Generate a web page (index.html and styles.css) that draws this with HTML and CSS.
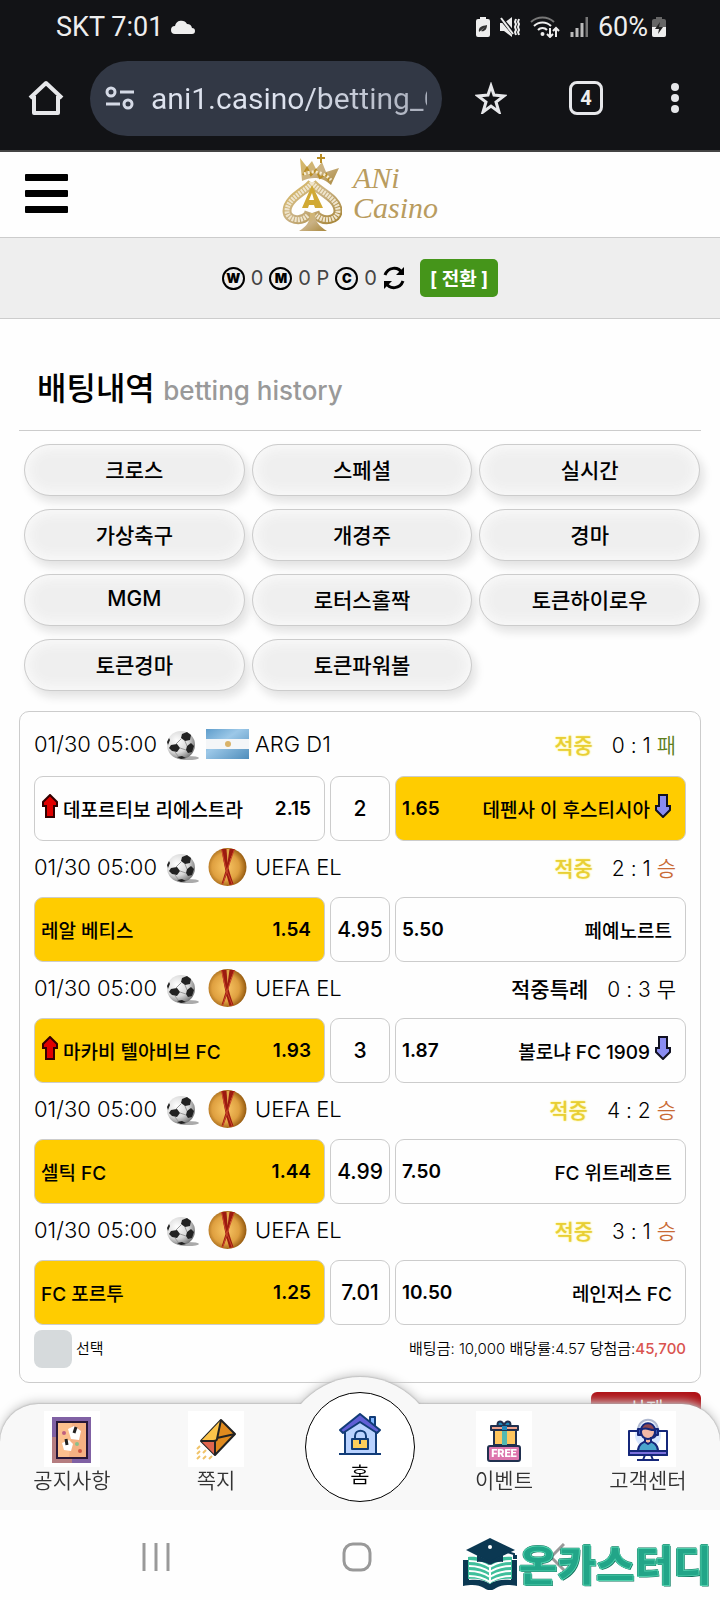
FILE: index.html
```html
<!DOCTYPE html>
<html lang="ko">
<head>
    <meta charset="UTF-8">
    <meta name="viewport" content="width=device-width, initial-scale=1.0">
    <title>배팅내역 - ANi Casino</title>
    <link rel="stylesheet" href="styles.css">
</head>
<body>
    <!-- Shared icons -->
    <svg class="defs" width="0" height="0" aria-hidden="true">
        <defs>
            <radialGradient id="ballShade" cx="35%" cy="35%" r="70%">
                <stop offset="0" stop-color="#ffffff"/>
                <stop offset="0.6" stop-color="#d8d8d8"/>
                <stop offset="1" stop-color="#777777"/>
            </radialGradient>
            <radialGradient id="uefaShade" cx="45%" cy="50%" r="55%">
                <stop offset="0" stop-color="#f9c766"/>
                <stop offset="0.65" stop-color="#dfa040"/>
                <stop offset="1" stop-color="#94590f"/>
            </radialGradient>
            <linearGradient id="gold" x1="0" y1="0" x2="1" y2="1">
                <stop offset="0" stop-color="#d9b95f"/>
                <stop offset="0.5" stop-color="#c9b184"/>
                <stop offset="1" stop-color="#a9883c"/>
            </linearGradient>
            <linearGradient id="sky" x1="0" y1="0" x2="1" y2="1">
                <stop offset="0" stop-color="#5f9dcb"/>
                <stop offset="0.4" stop-color="#9cc8e8"/>
                <stop offset="1" stop-color="#4f8dbb"/>
            </linearGradient>
        </defs>
        <symbol id="ball" viewBox="0 0 34 30">
            <ellipse cx="22" cy="27" rx="11" ry="2" fill="#aaa"/>
            <circle cx="15" cy="14" r="14" fill="url(#ballShade)"/>
            <g fill="#222">
                <path d="M16 3l5-2 4 3-1 5-5 1-4-3z"/>
                <path d="M5 14l6-1 3 4-3 4-5-1-3-3z"/>
                <path d="M21 15l4-3 3 3-2 6-4 1-2-3z"/>
                <path d="M1 11l2-4 1 2-2 5z"/>
                <path d="M11 26l5-1 4 2-5 1z"/>
            </g>
            <path d="M15 8l-5 5M19 10l2 5M14 17l6 2M9 21l3 4" stroke="#999" fill="none"/>
        </symbol>
        <symbol id="uefa" viewBox="0 0 38 38">
            <circle cx="19" cy="19" r="19" fill="url(#uefaShade)"/>
            <path d="M13 1l13 0-4 10-2 9 2 7 3 9-4 1-3-10-3 8-2 1 4-13-2-10z" fill="#9c1b10"/>
            <path d="M18 1l3 0-2 14z" fill="#e2a548"/>
            <path d="M13 1l4 18 7 18M26 1l-7 20-5 16" stroke="#c9462a" fill="none"/>
        </symbol>
        <symbol id="up" viewBox="0 0 18 24">
            <path d="M9 1l7 7v4h-3v11H5V12H2V8z" fill="#e00000" stroke="#300" stroke-width="2"/>
        </symbol>
        <symbol id="down" viewBox="0 0 18 24">
            <path d="M9 23l7-7v-4h-3V1H5v11H2v4z" fill="#8a8cf0" stroke="#112" stroke-width="2"/>
        </symbol>
    </svg>

    <!-- Phone status bar and browser toolbar -->
    <div class="browser">
        <div class="status">
            <span>SKT 7:01</span>
            <svg width="24" height="14" viewBox="0 0 24 14"><path d="M4 14a4 4 0 0 1 0-8A6.500 6.500 0 0 1 16 4a5 5 0 0 1 5 4 3 3 0 0 1 0 6z" fill="#eee"/></svg>
            <div class="status-right">
                <svg width="14" height="20" viewBox="0 0 14 20"><path d="M4 0h6v2h2a2 2 0 0 1 2 2v14a2 2 0 0 1-2 2H2a2 2 0 0 1-2-2V4a2 2 0 0 1 2-2h2z" fill="#eee"/><path d="M3 15c-1-5 3-6 8-7 0 5-3 7-6 6l4-4" fill="#333"/></svg>
                <svg width="20" height="20" viewBox="0 0 20 20"><path d="M0 6h4l8-6v20l-8-6H0z" fill="#eee"/><path d="M0 0l14 17" stroke="#121316" stroke-width="4"/><path d="M1 1l12 16" stroke="#eee" stroke-width="2"/><path d="M16 2l-1 3 1 2-1 3 1 3-1 2 1 3M19 2l-1 3 1 2-1 3 1 3-1 2 1 3" stroke="#eee" stroke-width="2" fill="none"/></svg>
                <svg width="30" height="22" viewBox="0 0 30 22" fill="none" stroke="#eee" stroke-width="2"><path d="M1 6a17 17 0 0 1 23 0" stroke="#777"/><path d="M4 10a12 12 0 0 1 17 0M8 14a6 6 0 0 1 9 0"/><circle cx="12.500" cy="18" r="1" fill="#eee"/><path d="M20 12v9M17 18l3 3 3-3M26 21v-9M23 15l3-3 3 3"/></svg>
                <svg width="18" height="20" viewBox="0 0 18 20" stroke-width="3" stroke="#bbb"><path d="M2 15v5M7 11v9M12 6v14"/><path d="M17 0v20" stroke="#777"/></svg>
                <span>60%</span>
                <svg width="14" height="20" viewBox="0 0 14 20"><path d="M4 0h6v2h2a2 2 0 0 1 2 2v14a2 2 0 0 1-2 2H2a2 2 0 0 1-2-2V4a2 2 0 0 1 2-2h2z" fill="#666"/><path d="M0 10h14v8a2 2 0 0 1-2 2H2a2 2 0 0 1-2-2z" fill="#eee"/><path d="M8 5l-5 7h4l-1 5 5-7H7z" fill="#222"/></svg>
            </div>
        </div>
        <div class="toolbar">
            <button class="tool" aria-label="Home">
                <svg width="36" height="36" viewBox="0 0 36 36" fill="none" stroke="#e6e7ea" stroke-width="4" stroke-linejoin="round"><path d="M2 18L18 3l16 15M6 16v17h24V16"/></svg>
            </button>
            <label class="address">
                <svg width="30" height="26" viewBox="0 0 30 26" fill="none" stroke="#d5dae6" stroke-width="3"><circle cx="6" cy="7" r="4"/><path d="M15 7h14M1 19h14"/><circle cx="23" cy="19" r="4"/></svg>
                <input type="text" value="ani1.casino/betting_C" aria-label="Address">
            </label>
            <button class="tool" aria-label="Bookmark">
                <svg width="32" height="32" viewBox="0 0 32 32" fill="none" stroke="#e6e7ea" stroke-width="3"><path d="M16 4l3 9 10 1-8 6 3 10-8-6-8 6 3-10-8-6 10-1z"/></svg>
            </button>
            <button class="tool tabs" aria-label="Tabs">4</button>
            <button class="tool" aria-label="More">
                <svg width="10" height="32" viewBox="0 0 10 32" fill="#e6e7ea"><circle cx="5" cy="5" r="4"/><circle cx="5" cy="16" r="4"/><circle cx="5" cy="27" r="4"/></svg>
            </button>
        </div>
    </div>

    <header class="header">
        <button class="menu" aria-label="Menu"><i></i><i></i><i></i></button>
        <a class="logo" href="#">
            <svg width="60" height="78" viewBox="0 0 60 78">
                <path d="M30 29C24 37 5 44 5 57c0 9 14 12 21 4l1-3M30 29c6 8 26 15 26 28 0 9-14 12-22 4l-1-3" fill="none" stroke="url(#gold)" stroke-width="9"/>
                <path d="M30 29C24 37 5 44 5 57c0 9 14 12 21 4M30 29c6 8 26 15 26 28 0 9-14 12-22 4" fill="none" stroke="#efe5cd" stroke-width="5" stroke-dasharray="2 1"/>
                <path d="M28 59h5c0 9 4 13 12 18H17c8-5 11-9 11-18z" fill="url(#gold)"/>
                <path d="M20 27L18 4l7 9 5-6 4 8 6-7 4 10 13-4-8 17c-8-8-19-9-29-4z" fill="url(#gold)"/>
                <path d="M21 21l4-7 4 7 5-5 4 8 6-4 3 7M39 0v9M35 4h8" fill="none" stroke="#b98d25" stroke-width="2"/>
                <path d="M22 20c9-4 20-2 27 6" fill="none" stroke="#f5ecd3" stroke-width="3" stroke-dasharray="2 2"/>
                <path d="M30 31l11 23h-8l-1-3h-5l-1 3h-6z" fill="#d1a934"/>
                <path d="M30 39l2 7h-5z" fill="#fff"/>
            </svg>
            <span class="logo-text"><span>ANi</span><span>Casino</span></span>
        </a>
    </header>

    <div class="wallet">
        <b class="coin">W</b>
        <span>0</span>
        <b class="coin">M</b>
        <span>0 P</span>
        <b class="coin">C</b>
        <span>0</span>
        <button class="refresh" aria-label="새로고침">
            <svg width="22" height="24" viewBox="0 0 22 24" fill="none" stroke="#000" stroke-width="3"><path d="M2 9C5 1 15 0 19 7M20 15C17 23 7 24 3 17"/><path d="M21 1v8h-8zM1 23v-8h8z" fill="#000" stroke="none"/></svg>
        </button>
        <button class="convert">[ 전환 ]</button>
    </div>

    <main>
        <h1>배팅내역 <small>betting history</small></h1>

        <div class="games">
            <button>크로스</button>
            <button>스페셜</button>
            <button>실시간</button>
            <button>가상축구</button>
            <button>개경주</button>
            <button>경마</button>
            <button>MGM</button>
            <button>로터스홀짝</button>
            <button>토큰하이로우</button>
            <button>토큰경마</button>
            <button>토큰파워볼</button>
        </div>

        <section class="slip">
            <div class="match first">
                <span>01/30 05:00</span>
                <svg class="ball"><use href="#ball"/></svg>
                <svg class="league" viewBox="0 0 43 30"><rect width="43" height="30" fill="url(#sky)"/><path d="M0 10h43v10H0z" fill="#f4f6f8"/><circle cx="22" cy="15" r="3" fill="#d9b36a"/></svg>
                <span>ARG D1</span>
                <div class="result"><b class="hit">적중</b><span>0 : 1 <em class="lose">패</em></span></div>
            </div>
            <div class="odds">
                <div class="team"><svg class="arrow"><use href="#up"/></svg><span>데포르티보 리에스트라</span><b>2.15</b></div>
                <div class="draw">2</div>
                <div class="team away picked"><b>1.65</b><span>데펜사 이 후스티시아</span><svg class="arrow"><use href="#down"/></svg></div>
            </div>

            <div class="match">
                <span>01/30 05:00</span>
                <svg class="ball"><use href="#ball"/></svg>
                <svg class="league"><use href="#uefa"/></svg>
                <span>UEFA EL</span>
                <div class="result"><b class="hit">적중</b><span>2 : 1 <em class="win">승</em></span></div>
            </div>
            <div class="odds">
                <div class="team picked"><span>레알 베티스</span><b>1.54</b></div>
                <div class="draw">4.95</div>
                <div class="team away"><b>5.50</b><span>페예노르트</span></div>
            </div>

            <div class="match">
                <span>01/30 05:00</span>
                <svg class="ball"><use href="#ball"/></svg>
                <svg class="league"><use href="#uefa"/></svg>
                <span>UEFA EL</span>
                <div class="result"><b>적중특례</b><span>0 : 3 <em>무</em></span></div>
            </div>
            <div class="odds">
                <div class="team picked"><svg class="arrow"><use href="#up"/></svg><span>마카비 텔아비브 FC</span><b>1.93</b></div>
                <div class="draw">3</div>
                <div class="team away"><b>1.87</b><span>볼로냐 FC 1909</span><svg class="arrow"><use href="#down"/></svg></div>
            </div>

            <div class="match">
                <span>01/30 05:00</span>
                <svg class="ball"><use href="#ball"/></svg>
                <svg class="league"><use href="#uefa"/></svg>
                <span>UEFA EL</span>
                <div class="result"><b class="hit">적중</b><span>4 : 2 <em class="win">승</em></span></div>
            </div>
            <div class="odds">
                <div class="team picked"><span>셀틱 FC</span><b>1.44</b></div>
                <div class="draw">4.99</div>
                <div class="team away"><b>7.50</b><span>FC 위트레흐트</span></div>
            </div>

            <div class="match">
                <span>01/30 05:00</span>
                <svg class="ball"><use href="#ball"/></svg>
                <svg class="league"><use href="#uefa"/></svg>
                <span>UEFA EL</span>
                <div class="result"><b class="hit">적중</b><span>3 : 1 <em class="win">승</em></span></div>
            </div>
            <div class="odds">
                <div class="team picked"><span>FC 포르투</span><b>1.25</b></div>
                <div class="draw">7.01</div>
                <div class="team away"><b>10.50</b><span>레인저스 FC</span></div>
            </div>

            <div class="summary">
                <input type="checkbox" id="pick">
                <label for="pick">선택</label>
                <p>배팅금: 10,000 배당률:4.57 당첨금:<b>45,700</b></p>
            </div>
        </section>

        <button class="delete">삭제</button>
    </main>

    <!-- Fixed bottom menu -->
    <div class="bottom">
        <nav class="menu-bar">
            <a href="#">
                <span class="icon">
                    <svg width="56" height="56" viewBox="0 0 56 56">
                        <path d="M8 6h39v46H8z" fill="#8061a4"/><path d="M8 26h8v26H8z" fill="#3b2450"/><path d="M8 52V26h4v21h16v5z" fill="#b57d80"/>
                        <path d="M13 11h30v36H13z" fill="#fcc08e" stroke="#281838" stroke-width="2"/><path d="M28 12h14v34H25z" fill="#f4b183"/>
                        <path d="M24 18l6-3 7 5-2 9-8-1z" fill="#fff"/><path d="M18 32l7-3 4 4-2 7-7-1z" fill="#fff"/>
                        <path d="M32 16l-2 6M22 28l1 6" stroke="#222" stroke-width="3"/><circle cx="20" cy="22" r="2" fill="#c0607f"/><circle cx="33" cy="33" r="2" fill="#8bbf8a"/><circle cx="36" cy="40" r="2" fill="#d05a43"/>
                    </svg>
                </span>
                공지사항
            </a>
            <a href="#">
                <span class="icon">
                    <svg width="56" height="56" viewBox="0 0 56 56" stroke-linejoin="round">
                        <path d="M33 9l14 14-20 21-14-14z" fill="#e08a1e" stroke="#222" stroke-width="2"/>
                        <path d="M13 30l20-21-4 20z" fill="#fbc34a"/><path d="M13 30l14 14 0-14z" fill="#e0654e"/>
                        <path d="M33 9l-4 19c0 2-2 2-4 2l-12 0M29 27l18-4M27 30v14" fill="none" stroke="#222" stroke-width="2"/>
                        <path d="M9 38l3-3M9 43l3-3M9 48l3-3M15 42l3-3M15 48l3-3M21 48l3-3" stroke="#f0c46a" stroke-width="2"/>
                    </svg>
                </span>
                쪽지
            </a>
            <a class="active" href="#">
                <svg width="42" height="42" viewBox="0 0 42 42" stroke="#123c78" stroke-width="2" stroke-linejoin="round">
                    <path d="M31 4h5v12l-5-5z" fill="#7fb5ff"/><path d="M6 17L21 5l16 12v24H6z" fill="#b9d2ff"/>
                    <path d="M21 1L1 17l3 3 17-11 17 11 3-3z" fill="#615fd6"/>
                    <path d="M16 26v-3c0-7 11-7 11 0v3" fill="none"/><path d="M13 26h16v10H13z" fill="#ffcf5b"/><path d="M21 26v5M0 41h42"/>
                </svg>
                홈
            </a>
            <a href="#">
                <span class="icon">
                    <svg width="56" height="56" viewBox="0 0 56 56" stroke="#20304f" stroke-width="2" stroke-linejoin="round">
                        <path d="M28 14c-3-6-8-3-6 1M28 14c3-6 8-3 6 1" fill="#1e86b8"/><path d="M18 19h22v15H18z" fill="#ffc65e"/><path d="M26 19h5v15h-5z" fill="#53b9b2" stroke="none"/><path d="M15 15h27v4H15z" fill="#f0a58f"/><path d="M26 15h5v4h-5z" fill="#1e86b8" stroke="none"/>
                        <rect x="12" y="35" width="32" height="15" rx="2" fill="#dd75ad"/>
                        <text x="28" y="46" class="free">FREE</text>
                    </svg>
                </span>
                이벤트
            </a>
            <a href="#">
                <span class="icon">
                    <svg width="56" height="56" viewBox="0 0 56 56" stroke="#15277a" stroke-width="2" stroke-linejoin="round">
                        <circle cx="28" cy="24" r="13" fill="#d8e7ff" stroke="none"/><path d="M20 20H9v24h38V20H36" fill="none"/><path d="M9 40h38v4H9z" fill="#7b70dc"/>
                        <path d="M18 40c0-13 20-13 20 0z" fill="#4aa6cc"/><path d="M25 26h6v5l-3 2-3-2z" fill="#f3b9a6"/><circle cx="28" cy="21" r="7" fill="#f3b9a6"/><path d="M21 19c1-9 13-9 14 0-5 1-9-4-14 0z" fill="#8f4850"/>
                        <path d="M18 20c0-15 20-15 20 0" fill="none" stroke="#b0b9d0"/><path d="M18 18h3v6h-3zM35 18h3v6h-3z" fill="#3757b8"/><path d="M36 24c-1 3-3 3-6 3M25 44l-2 5h10l-2-5M17 49h22" fill="none"/>
                    </svg>
                </span>
                고객센터
            </a>
        </nav>
        <div class="system">
            <button aria-label="Recent"><svg width="28" height="28" viewBox="0 0 28 28" stroke="#999" stroke-width="3"><path d="M2 0v28M14 0v28M26 0v28"/></svg></button>
            <button aria-label="Home"><svg width="30" height="30" viewBox="0 0 30 30"><rect x="2" y="2" width="26" height="26" rx="9" fill="none" stroke="#999" stroke-width="3"/></svg></button>
            <button aria-label="Back"><svg width="16" height="28" viewBox="0 0 16 28" fill="none" stroke="#999" stroke-width="3"><path d="M15 1L2 14l13 13"/></svg></button>
        </div>
        <div class="watermark">
            <svg width="54" height="52" viewBox="0 0 54 52">
                <path d="M0 22l6 0v20c9-1 16 0 21 4 5-4 12-5 21-4V22h6v26c-10-2-16-1-21 2-4 3-8 3-12 0-5-3-11-4-21-2z" fill="#0b3852"/>
                <path d="M5 19c9-1 17 2 22 6 5-4 13-7 22-6v22c-9-1-17 1-22 5-5-4-13-6-22-5z" fill="#3fbf9b"/>
                <path d="M6 23c9 0 15 2 21 6 6-4 12-6 21-6M6 28c9 0 15 2 21 6 6-4 12-6 21-6M6 33c9 0 15 2 21 6 6-4 12-6 21-6M6 38c9 0 15 2 21 6 6-4 12-6 21-6M27 25v20" fill="none" stroke="#fff" stroke-width="2"/>
                <path d="M27 0l25 12-25 12L3 12z" fill="#0b3852"/><path d="M14 17v7c5-1 10 1 13 3 3-2 8-4 13-3v-7l-13 6z" fill="#0b3852"/><circle cx="27" cy="9" r="2" fill="#fff"/><path d="M41 13l10 3v5M50 20l3 0 0-3" fill="none" stroke="#0b3852" stroke-width="2"/>
            </svg>
            <span>온카스터디</span>
        </div>
    </div>
</body>
</html>
```
FILE: styles.css
```css
* {
    box-sizing: border-box;
}

body {
    margin: 0;
    background-color: #fefefe;
    color: #000;
    font-family: Inter, "Noto Sans CJK KR", sans-serif;
    font-size: 21px;
}

button {
    padding: 0;
    border: none;
    background: none;
    color: inherit;
    font-family: inherit;
    cursor: pointer;
}

a {
    color: inherit;
    text-decoration: none;
}

svg {
    display: block;
    flex: none;
}

.defs {
    position: absolute;
}

/* Status bar + browser toolbar */
.browser {
    height: 152px;
    background-color: #121316;
    border-bottom: 2px solid #444;
    color: #eee;
    font-family: Roboto, sans-serif;
}

.status {
    display: flex;
    align-items: center;
    gap: 8px;
    height: 54px;
    padding: 0 54px 0 56px;
    font-size: 27px;
}

.status-right {
    display: flex;
    align-items: center;
    gap: 10px;
    margin-left: auto;
}

.status-right span {
    margin-right: -6px;
}

.toolbar {
    display: flex;
    align-items: center;
    height: 88px;
    padding: 0 40px 0 28px;
}

.tool {
    flex: none;
}

.address {
    display: flex;
    flex: 1;
    align-items: center;
    gap: 16px;
    min-width: 0;
    height: 75px;
    margin: 0 33px 0 26px;
    padding: 0 15px;
    border-radius: 38px;
    background-color: #323845;
}

.address input {
    flex: 1;
    min-width: 0;
    padding: 0;
    border: none;
    outline: none;
    background: linear-gradient(90deg, #dde2ee 50%, #a9aebb);
    background-clip: text;
    -webkit-background-clip: text;
    color: transparent;
    font-family: Roboto, sans-serif;
    font-size: 30px;
}

.tabs {
    width: 34px;
    height: 34px;
    margin: 0 67px 0 62px;
    border: 3px solid #e6e7ea;
    border-radius: 8px;
    font-size: 20px;
    font-weight: bold;
}

/* Site header */
.header {
    display: flex;
    align-items: center;
    justify-content: center;
    position: relative;
    height: 86px;
    padding-bottom: 3px;
    border-bottom: 1px solid #ccc;
}

.menu {
    display: flex;
    flex-direction: column;
    gap: 9px;
    position: absolute;
    left: 25px;
}

.menu i {
    width: 43px;
    height: 7px;
    border-radius: 1px;
    background-color: #000;
}

.logo {
    display: flex;
    align-items: center;
    gap: 11px;
    color: #b99c5f;
    font: italic 30px/30px "Liberation Serif", serif;
}

.logo-text {
    display: flex;
    flex-direction: column;
}

.wallet {
    display: flex;
    align-items: center;
    justify-content: center;
    gap: 6px;
    height: 81px;
    border-bottom: 1px solid #ccc;
    background-color: #eee;
    color: #444;
    font-size: 20px;
}

.coin {
    width: 23px;
    height: 23px;
    border: 2px solid #000;
    border-radius: 50%;
    color: #000;
    font-size: 13px;
    font-weight: 900;
    line-height: 19px;
    text-align: center;
}

.convert {
    height: 38px;
    margin-left: 9px;
    padding: 0 10px 2px;
    border-radius: 5px;
    background-color: #45951a;
    color: #fff;
    font-size: 19px;
    font-weight: bold;
}

/* Betting history */
main {
    padding: 46px 19px 200px;
}

h1 {
    margin: 0 0 13px;
    padding: 0 18px 15px;
    border-bottom: 1px solid #ccc;
    font-size: 32px;
    font-weight: 500;
    line-height: 48px;
}

h1 small {
    color: #999;
    font-size: 26px;
    font-weight: 500;
}

.games {
    display: grid;
    grid-template-columns: repeat(3, 1fr);
    gap: 13px 7px;
    padding: 0 1px 0 5px;
}

.games button {
    height: 52px;
    padding-bottom: 3px;
    border: 1px solid #ccc;
    border-radius: 26px;
    background-color: #efefef;
    box-shadow: 4px 6px 10px #e2e2e2, inset 0 0 12px 4px #f9f9f9;
    font-size: 21px;
    font-weight: 500;
}

.slip {
    margin-top: 20px;
    padding: 0 14px 14px;
    border: 1px solid #ccc;
    border-radius: 10px;
}

.match {
    display: flex;
    align-items: center;
    height: 56px;
    padding: 0 10px 5px 0;
    font-size: 22px;
    font-weight: 300;
}

.first {
    height: 64px;
    padding-bottom: 0;
}

.ball {
    width: 34px;
    height: 30px;
    margin: 4px 6px 0 9px;
}

.league {
    width: 43px;
    height: 38px;
    margin-right: 6px;
}

.result {
    display: flex;
    gap: 19px;
    margin-left: auto;
    font-size: 21px;
}

.result b {
    font-weight: 500;
}

.result em {
    font-style: normal;
    font-weight: 350;
}

.result .hit {
    color: #e8cf35;
    text-shadow: 0 0 2px #ffee55;
}

.win {
    color: #c96a35;
}

.lose {
    color: #5f7f1f;
}

.odds {
    display: grid;
    grid-template-columns: 1fr 60px 1fr;
    gap: 5px;
    height: 65px;
}

.team,
.draw {
    display: flex;
    align-items: center;
    border: 1px solid #ccc;
    border-radius: 9px;
    font-size: 19px;
    font-weight: 500;
}

.team {
    padding: 0 13px 0 6px;
}

.team b:last-child {
    margin-left: auto;
}

.team b {
    font-weight: 600;
}

.away span {
    margin-left: auto;
}

.picked {
    background-color: #fc0;
}

.draw {
    justify-content: center;
    font-size: 21px;
}

.arrow {
    width: 18px;
    height: 24px;
    margin: 0 4px 5px 0;
}

.away .arrow {
    margin: 0 0 5px 4px;
}

.summary {
    display: flex;
    align-items: center;
    gap: 4px;
    margin-top: 5px;
    font-size: 15px;
    font-weight: 350;
}

.summary input {
    appearance: none;
    width: 38px;
    height: 38px;
    margin: 0;
    border-radius: 8px;
    background-color: #d6dadc;
}

.summary label,
.summary p {
    margin: 0;
    padding-bottom: 4px;
}

.summary p {
    margin-left: auto;
}

.summary b {
    color: #d9534f;
    font-weight: 500;
}

.delete {
    display: block;
    width: 110px;
    height: 36px;
    margin: 9px 0 0 auto;
    border-radius: 6px;
    background-color: #b01116;
    color: #fff;
    font-size: 19px;
    line-height: 36px;
}

/* Bottom menu */
.bottom {
    position: fixed;
    right: 0;
    bottom: 0;
    left: 0;
}

.menu-bar {
    display: grid;
    grid-template-columns: repeat(5, 1fr);
    justify-items: center;
    height: 106px;
    border-radius: 38px 38px 0 0;
    background-color: #f8f8f8;
    filter: drop-shadow(0 0 1px #999) drop-shadow(0 -2px 5px #ccc);
    color: #333;
    font-size: 21px;
    font-weight: 350;
    line-height: 27px;
}

/* Bump behind the home button */
.menu-bar::before {
    content: "";
    position: absolute;
    top: -27px;
    left: calc(50% - 78px);
    z-index: -1;
    width: 156px;
    height: 100px;
    border-radius: 78px 78px 0 0;
    background-color: #f8f8f8;
}

.menu-bar a {
    padding-top: 7px;
    text-align: center;
}

.icon {
    display: block;
    width: 56px;
    margin: 0 auto;
    background-color: #fff;
}

.free {
    fill: #fff;
    stroke: none;
    font-family: Roboto, sans-serif;
    font-size: 11px;
    font-weight: 900;
    text-anchor: middle;
}

.menu-bar .active {
    display: flex;
    flex-direction: column;
    align-items: center;
    gap: 6px;
    width: 110px;
    height: 110px;
    margin-top: -12px;
    padding-top: 20px;
    border: 1px solid #000;
    border-radius: 50%;
    background-color: #fff;
    color: #000;
}

.system {
    display: grid;
    grid-template-columns: 1fr 90px 1fr;
    align-items: center;
    justify-items: center;
    position: relative;
    height: 90px;
    padding: 4px 7px 0 0;
    background-color: #fefefe;
}

.watermark {
    display: flex;
    align-items: center;
    gap: 1px;
    position: absolute;
    right: 8px;
    bottom: 9px;
    color: #22a588;
    font-family: "Noto Sans CJK KR", sans-serif;
    font-size: 42px;
    font-weight: 900;
    line-height: 52px;
}

.watermark svg {
    width: 56px;
}

.watermark span {
    padding-bottom: 2px;
    -webkit-text-stroke: 1px #4fd0ac;
    text-shadow: 1px 1px 0 #12715d, -1px 0 0 #12715d, 0 -1px 0 #12715d;
}
```
